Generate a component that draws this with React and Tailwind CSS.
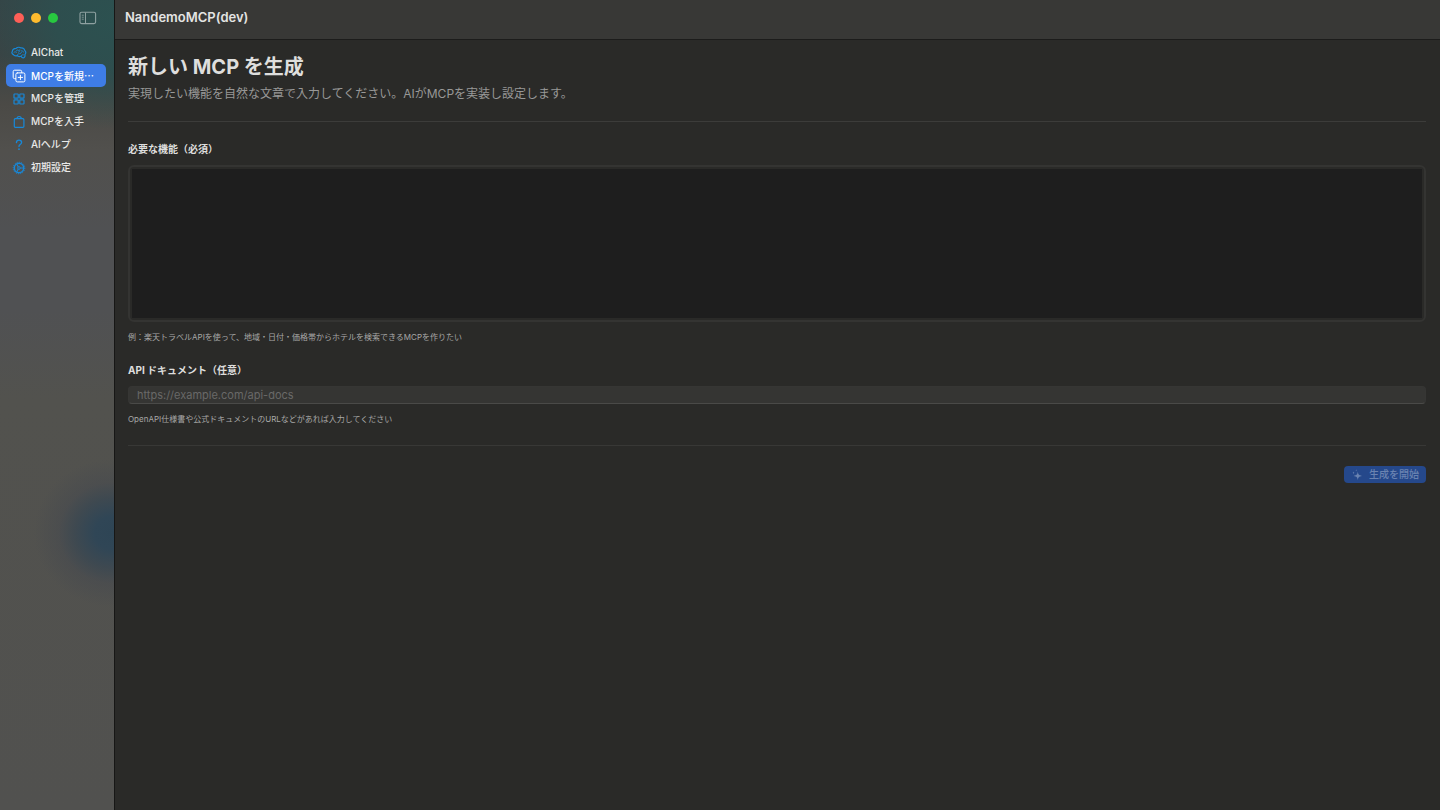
import { useState } from 'react';

function SidebarToggleIcon() {
  return (
    <svg width="18" height="14" viewBox="0 0 18 14" fill="none" stroke="currentColor">
      <rect x="1" y="1.2" width="15.600" height="11.400" rx="1.600" strokeWidth="1.100" />
      <path d="M6.500 1.500v11" />
      <path d="M2.800 4.200h2M2.800 6.200h2M2.800 8.200h2" strokeWidth="0.800" />
    </svg>
  );
}

function BrainIcon() {
  return (
    <svg width="16" height="14" viewBox="0 0 16 14" fill="none" stroke="currentColor" strokeWidth="1.200" strokeLinecap="round" strokeLinejoin="round">
      <path d="M5.200 2.300C6.600 1 9 1.200 10 2c2-.3 3.500.7 3.700 2.400 1.200 1.200 1.300 3 .2 4.200.4 1.700-.3 3.100-1.500 3.300-1 .1-1.800-.6-2.300-1.700-1.500.6-3 .4-3.900-.5-1.500.4-3.200.1-3.800-1.100C1 8 .5 6.600 1.300 5.500 1.400 3.700 3 2.400 5.200 2.300Z" />
      <path d="M3 6.300c1-.8 2.200-.6 2.800.2M5.600 4.300c.9-.6 1.900-.4 2.400.4M8.800 3.800c.2 1.200-.3 2-1.200 2.400M6.200 9.500c0-1 .8-1.800 2-1.700 1.200.1 2-.5 2.200-1.600M10.600 4.800c1 0 1.800.5 2 1.300M10.100 10c.2-.9 1.200-1.400 2.300-1.200" strokeWidth="0.900" />
    </svg>
  );
}

function NewIcon() {
  return (
    <svg width="14" height="14" viewBox="0 0 14 14" fill="none" stroke="currentColor" strokeLinecap="round" strokeLinejoin="round">
      <path d="M3.500 9.700H2.600A1.400 1.400 0 0 1 1.200 8.300V2.600A1.400 1.400 0 0 1 2.600 1.200h5.700A1.400 1.400 0 0 1 9.700 2.600v.9" />
      <rect x="3.900" y="3.900" width="9" height="9" rx="1.400" />
      <path d="M8.400 6.200v4.400M6.200 8.400h4.400" />
    </svg>
  );
}

function GridIcon() {
  return (
    <svg width="14" height="14" viewBox="0 0 14 14" fill="none" stroke="currentColor" strokeWidth="1.200">
      <rect x="2" y="2" width="4.200" height="4.200" rx="0.500" />
      <rect x="7.800" y="2" width="4.200" height="4.200" rx="0.500" />
      <rect x="2" y="7.800" width="4.200" height="4.200" rx="0.500" />
      <rect x="7.800" y="7.800" width="4.200" height="4.200" rx="0.500" />
    </svg>
  );
}

function BagIcon() {
  return (
    <svg width="14" height="14" viewBox="0 0 14 14" fill="none" stroke="currentColor" strokeWidth="1.200" strokeLinejoin="round">
      <rect x="2.300" y="3.700" width="9.600" height="8.600" rx="1" />
      <path d="M4.900 3.700C4.900 2.300 5.800 1.500 7.100 1.500s2.200.8 2.200 2.200" />
    </svg>
  );
}

function QuestionIcon() {
  return (
    <svg width="14" height="14" viewBox="0 0 14 14" fill="none" stroke="currentColor" strokeLinecap="round" strokeLinejoin="round">
      <path d="M4.400 4.600C4.500 3.100 5.500 2.200 7 2.200s2.600.9 2.600 2.200c0 1.100-.7 1.600-1.500 2.200-.8.500-1.100 1-1.100 2" strokeWidth="1.300" />
      <circle cx="7" cy="11.200" r="0.850" fill="currentColor" stroke="none" />
    </svg>
  );
}

function GearIcon() {
  return (
    <svg width="14" height="14" viewBox="0 0 14 14" fill="none" stroke="currentColor">
      <circle cx="7" cy="7" r="4.700" strokeWidth="1.500" />
      <circle cx="7" cy="7" r="5.800" strokeWidth="0.900" strokeDasharray="1.100 1.100" />
      <circle cx="7" cy="7" r="1.300" />
      <path d="M8.300 7h3.300M6.300 5.900 4.700 3.100M6.300 8.100l-1.600 2.800" strokeWidth="1.100" />
    </svg>
  );
}

function SparklesIcon() {
  return (
    <svg width="12" height="12" viewBox="0 0 12 12" fill="currentColor">
      <path d="M6.800 2.600C7.200 5.600 7.700 6.300 11 6.900 7.700 7.500 7.200 8.200 6.800 11.200 6.400 8.200 5.900 7.500 2.600 6.900 5.900 6.300 6.400 5.600 6.800 2.600Z" />
      <path d="M2.500 2.200c.1 1.200.4 1.500 1.600 1.600C2.900 3.900 2.600 4.200 2.500 5.400 2.400 4.200 2.100 3.900.9 3.800 2.100 3.700 2.400 3.400 2.500 2.200Z" />
      <path d="M5.200.200c.1.800.3 1 1.100 1.100-.8.100-1 .3-1.100 1.100-.1-.8-.3-1-1.100-1.100.8-.1 1-.3 1.100-1.100Z" />
    </svg>
  );
}

const menu = [
  { id: 'chat', label: 'AIChat', Icon: BrainIcon },
  { id: 'create', label: 'MCPを新規', more: true, Icon: NewIcon },
  { id: 'manage', label: 'MCPを管理', Icon: GridIcon },
  { id: 'store', label: 'MCPを入手', Icon: BagIcon },
  { id: 'help', label: 'AIヘルプ', Icon: QuestionIcon },
  { id: 'setup', label: '初期設定', Icon: GearIcon },
];

function Sidebar({ active, onSelect }) {
  return (
    <aside className="w-[115px] shrink-0 border-r border-[#171716] bg-[#51514f] bg-[radial-gradient(ellipse_78px_74px_at_112px_533px,#2e4555_0%,#304656_22%,#3a4751cc_48%,#45494f80_68%,#51514f00_100%),radial-gradient(ellipse_130px_110px_at_100%_20px,#2c5150_0%,#2e4e4e_45%,#2e4e4e00_100%),linear-gradient(180deg,#364446_0px,#3a4344_55px,#4b4a46_105px,#51504d_150px,#505153_230px,#505153_310px,#52524e_400px,#51514f_100%)]">
      <div className="flex h-[35px] items-center justify-between pl-3.5 pr-[17px]">
        <div className="flex gap-[7px]">
          <button aria-label="閉じる" className="size-2.5 rounded-full bg-[#fe5f57]" />
          <button aria-label="しまう" className="size-2.5 rounded-full bg-[#febb2e]" />
          <button aria-label="拡大" className="size-2.5 rounded-full bg-[#28c840]" />
        </div>
        <button aria-label="サイドバー" className="text-[#8fa1a1]">
          <SidebarToggleIcon />
        </button>
      </div>
      <nav className="flex flex-col pl-1.5 pr-2 pt-1.5">
        {menu.map(({ id, label, more, Icon }) => (
          <button
            key={id}
            onClick={() => onSelect(id)}
            className={`flex h-[23px] items-center gap-1 rounded-[5px] pl-[5px] text-left text-[10px] font-medium whitespace-nowrap ${
              active === id ? 'bg-[#3e7de6] text-white' : 'text-[#e9e9e8]'
            }`}
          >
            <span className={`flex w-4 shrink-0 justify-center ${active === id ? 'text-white' : 'text-[#1888d8]'}`}>
              <Icon />
            </span>
            <span>
              {label}
              {more && <span className="font-['Noto_Sans_CJK_JP',sans-serif]">…</span>}
            </span>
          </button>
        ))}
      </nav>
    </aside>
  );
}

export default function App() {
  const [active, setActive] = useState('create');
  const [feature, setFeature] = useState('');
  const [docs, setDocs] = useState('');

  return (
    <div lang="ja" className="flex min-h-screen bg-[#2a2a28] font-[Inter,'Noto_Sans_CJK_JP',sans-serif] text-[#dededd]">
      <Sidebar active={active} onSelect={setActive} />

      <div className="min-w-0 flex-1">
        <header className="flex h-10 items-center border-b border-[#1c1c1b] bg-[#383836] px-2.5 pb-1">
          <span className="text-[13px] font-semibold text-[#e4e4e3]">NandemoMCP(dev)</span>
        </header>

        <main className="pt-[13px] pr-3.5 pl-[13px]">
          <h1 className="text-[20px] leading-7 font-bold">新しい MCP を生成</h1>
          <p className="mt-1 text-[12px] leading-[18px] text-[#989897]">
            実現したい機能を自然な文章で入力してください。AIがMCPを実装し設定します。
          </p>
          <hr className="mt-[18px] border-[#3c3c3a]" />

          <form onSubmit={(e) => e.preventDefault()}>
            <label htmlFor="feature" className="mt-[19px] block text-[10px] leading-4 font-bold">
              必要な機能（必須）
            </label>
            <div className="mt-2 flex rounded-md border-2 border-[#343432] p-0.5">
              <textarea
                id="feature"
                value={feature}
                onChange={(e) => setFeature(e.target.value)}
                className="h-[149px] w-full resize-none bg-[#1e1e1e] p-1 text-[11px] outline-none"
              />
            </div>
            <p className="mt-[7px] text-[8px] leading-4 text-[#a8a8a7]">
              例：楽天トラベルAPIを使って、地域・日付・価格帯からホテルを検索できるMCPを作りたい
            </p>

            <label htmlFor="docs" className="mt-[17px] block text-[10px] leading-4 font-bold">
              API ドキュメント（任意）
            </label>
            <input
              id="docs"
              type="text"
              value={docs}
              onChange={(e) => setDocs(e.target.value)}
              placeholder="https://example.com/api-docs"
              className="mt-2 block h-[18px] w-full rounded-[4px] border border-[#363634] border-b-[#4a4a48] bg-[#353533] px-2 text-[11px] outline-none placeholder:text-[#696968]"
            />
            <p className="mt-[7px] text-[8px] leading-4 text-[#a8a8a7]">
              OpenAPI仕様書や公式ドキュメントのURLなどがあれば入力してください
            </p>
            <hr className="mt-[18px] border-[#383836]" />

            <div className="mt-5 flex justify-end">
              <button
                type="submit"
                disabled={!feature}
                className="flex h-[17px] items-center gap-1.5 rounded-[4px] bg-[#25488b] px-[7px] text-[10px] font-medium text-[#6a83b1]"
              >
                <SparklesIcon />
                生成を開始
              </button>
            </div>
          </form>
        </main>
      </div>
    </div>
  );
}
